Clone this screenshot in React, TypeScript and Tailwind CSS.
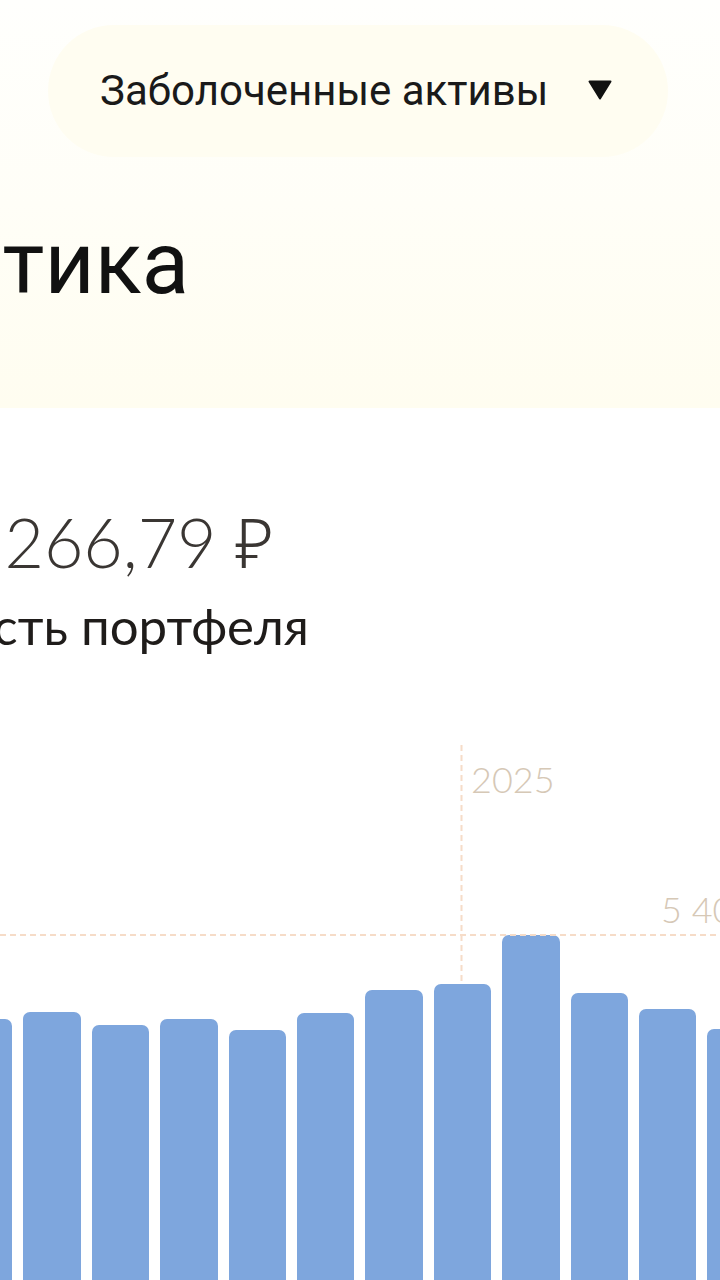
import React from "react";

const bars = [261, 268, 255, 261, 250, 267, 290, 296, 345, 287, 271, 251];

export default function App() {
  return (
    <div className="relative h-[1280px] w-[720px] overflow-hidden bg-white">
      {/* header */}
      <div className="h-[408px] bg-gradient-to-b from-[#fffffd] via-[#fffef7] to-[#fffdf0] pt-[25px]">
        <div className="ml-[48px] flex h-[132px] w-[620px] items-center rounded-full bg-[#fffdf1] pl-[52px]">
          <span
            className="whitespace-nowrap text-[42px] leading-none text-[#1a1a1a]"
            style={{ fontFamily: "Roboto, 'Noto Sans', sans-serif" }}
          >
            Заболоченные активы
          </span>
          <svg className="ml-[40px] mt-[-2px] shrink-0" width="24" height="20" viewBox="0 0 24 20">
            <path d="M1.5 1.5 H22.5 L12 18.5 Z" fill="#111" stroke="#111" strokeWidth="2" strokeLinejoin="round" />
          </svg>
        </div>
        <div className="mt-[63px] flex w-[189px] justify-end">
          <span
            className="whitespace-nowrap text-[87px] leading-none text-[#111]"
            style={{ fontFamily: "Roboto, 'Noto Sans', sans-serif" }}
          >
            Аналитика
          </span>
        </div>
      </div>

      {/* value */}
      <div className="mt-[100px] flex w-[274px] justify-end">
        <span
          className="whitespace-nowrap text-[68px] font-light leading-none text-[#3a3633]"
          style={{ fontFamily: "Lato, 'Open Sans', sans-serif" }}
        >
          5 437 266,79{" "}
          <span className="font-light" style={{ fontFamily: "'Open Sans', 'Noto Sans', sans-serif" }}>
            ₽
          </span>
        </span>
      </div>
      <div className="mt-[24px] flex w-[309px] justify-end">
        <span
          className="whitespace-nowrap text-[51px] leading-none text-[#1f1c1a]"
          style={{ fontFamily: "Lato, 'Open Sans', sans-serif" }}
        >
          Стоимость портфеля
        </span>
      </div>

      {/* chart */}
      <div className="absolute left-0 top-[740px] h-[540px] w-[720px] overflow-hidden">
        <div className="absolute bottom-0 left-[-45px] flex items-end gap-[11px]">
          {bars.map((h, i) => (
            <div key={i} className="w-[57.4px] shrink-0 rounded-t-[7px] bg-[#7ea6dd]" style={{ height: h }} />
          ))}
        </div>
        <svg className="absolute left-0 top-0" width="720" height="540">
          <line x1="0" y1="195" x2="720" y2="195" stroke="#f6dcc8" strokeWidth="2" strokeDasharray="6 4" />
          <line x1="461.5" y1="5" x2="461.5" y2="244" stroke="#f6dcc8" strokeWidth="2" strokeDasharray="6 4" />
        </svg>
        <span
          className="absolute left-[471px] top-[21px] whitespace-nowrap text-[36px] font-light leading-none text-[#d6c8b6]"
          style={{ fontFamily: "Lato, 'Open Sans', sans-serif" }}
        >
          2025
        </span>
        <span
          className="absolute left-[661px] top-[151px] whitespace-nowrap text-[36px] font-light leading-none text-[#d6c8b6]"
          style={{ fontFamily: "Lato, 'Open Sans', sans-serif" }}
        >
          5 409 877 ₽
        </span>
      </div>
    </div>
  );
}
